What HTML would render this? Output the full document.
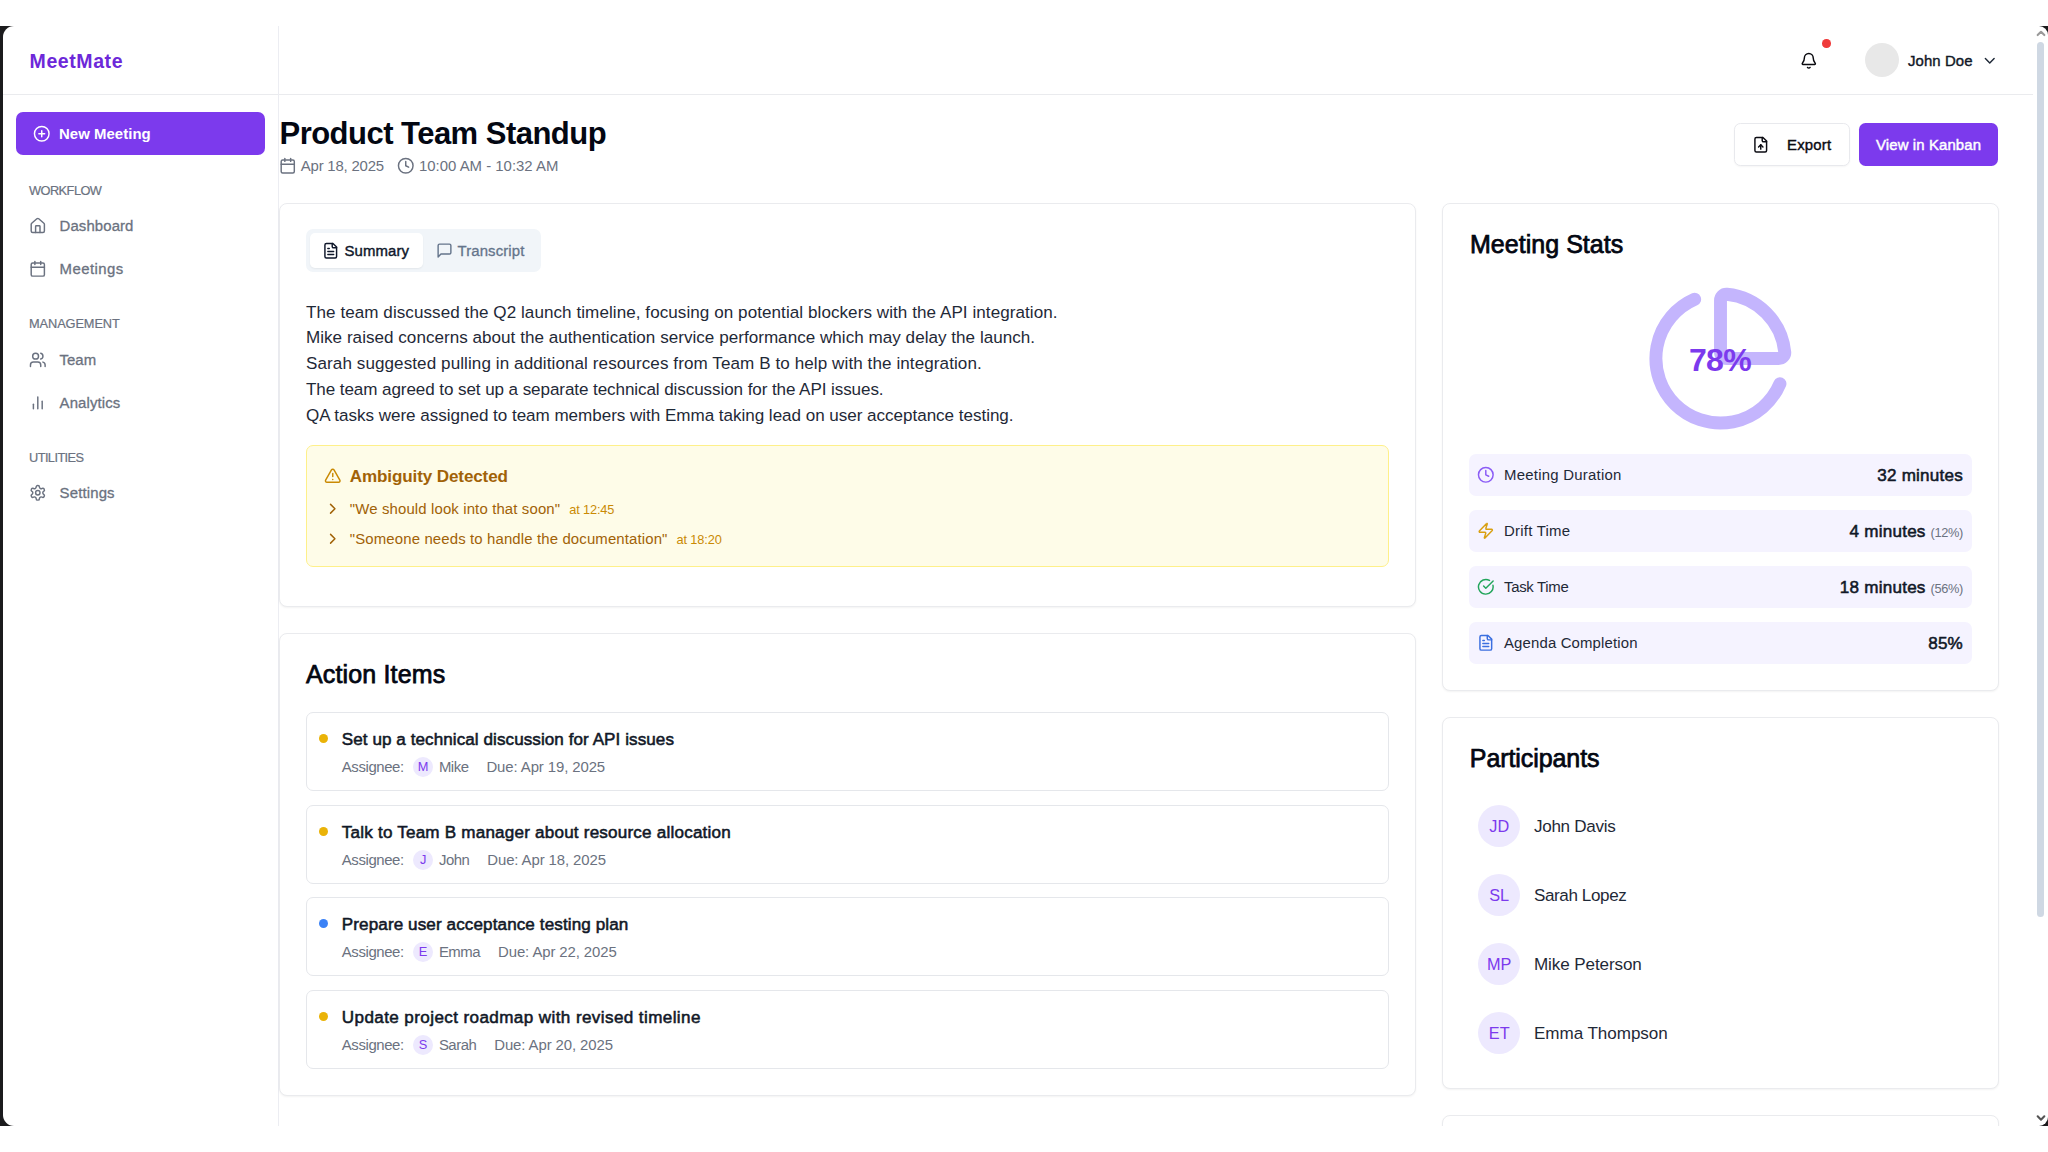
<!DOCTYPE html>
<html lang="en">
<head>
<meta charset="utf-8">
<title>MeetMate - Product Team Standup</title>
<style>
*{box-sizing:border-box;margin:0;padding:0}
html,body{width:2048px;height:1152px;overflow:hidden;background:#fff}
body{font-family:"Liberation Sans","DejaVu Sans",sans-serif;color:#1f2937;position:relative;-webkit-font-smoothing:antialiased}
svg{display:block;fill:none;stroke:currentColor;stroke-width:2;stroke-linecap:round;stroke-linejoin:round}
.frame{position:absolute;left:0;top:26px;width:2048px;height:1100px;background:#1b1b1d}
.win{position:absolute;left:3px;top:26px;width:2045.4px;height:1100px;background:#fff;border-radius:11px 9px 9px 11px;overflow:hidden}
.abs{position:absolute}
.sb{font-weight:400;-webkit-text-stroke:0.45px currentColor}
.md{font-weight:400;-webkit-text-stroke:0.3px currentColor}
/* header */
.hdr{position:absolute;left:0;top:0;width:2030px;height:68.5px;border-bottom:1px solid #eaebee}
.logo{position:absolute;left:26.6px;top:23px;font-size:19.5px;font-weight:700;color:#6d28d9;letter-spacing:.58px;line-height:24px}
/* sidebar */
.side{position:absolute;left:0;top:0;width:275.6px;height:1100px;border-right:1px solid #ecedf2}
.newbtn{position:absolute;left:13px;top:86px;width:249px;height:43px;background:#7c3aed;border-radius:7px;color:#fff}
.newbtn svg{position:absolute;left:17.3px;top:12.8px;width:17.5px;height:17.5px}
.newbtn span{position:absolute;left:43px;top:12px;font-size:14.93px;line-height:19px;font-weight:700;letter-spacing:.05px}
.sec{position:absolute;left:26px;font-size:12.8px;color:#6b7280;line-height:16px;letter-spacing:-.1px;-webkit-text-stroke:.2px currentColor}
.nav{position:absolute;left:27px;height:20px;color:#6b7280;font-size:14.93px;line-height:20px}
.nav svg{position:absolute;left:-.7px;top:.6px;width:17.6px;height:17.6px}
.nav span{position:absolute;left:29.6px;top:-.5px;white-space:nowrap}
/* main */
.title{position:absolute;left:276.5px;top:88.5px;font-size:31px;font-weight:700;color:#030712;letter-spacing:-.52px;line-height:38px;white-space:nowrap}
.meta{position:absolute;left:276px;top:130px;height:20px;font-size:14.93px;line-height:20px;color:#6b7280;white-space:nowrap;letter-spacing:-.2px}
.meta svg{position:absolute;top:1px;width:17.5px;height:17.5px;stroke-width:2}
.card{position:absolute;background:#fff;border:1px solid #eaebee;border-radius:8px;box-shadow:0 1px 2px rgba(0,0,0,.05)}
.h2{position:absolute;font-size:25px;line-height:32px;color:#030712;white-space:nowrap;-webkit-text-stroke:0.75px currentColor;letter-spacing:.15px}

/* top right */
.bell{position:absolute;left:1796.8px;top:26px;width:17.6px;height:17.6px;color:#0a0a0f}
.dot{position:absolute;left:1819.2px;top:13px;width:8.6px;height:8.6px;border-radius:50%;background:#ef3b3b}
.ava{position:absolute;left:1862px;top:17.3px;width:34.2px;height:34.2px;border-radius:50%;background:#e8e8e8}
.uname{position:absolute;left:1905px;top:25px;font-size:14.93px;line-height:20px;color:#111827;white-space:nowrap}
.chev{position:absolute;left:1978px;top:26px;width:17.5px;height:17.5px;color:#1f2937}
.btn{position:absolute;top:97px;height:43px;border-radius:6.5px;font-size:14.93px;line-height:20px;white-space:nowrap}
.btn.out{left:1731px;width:116px;border:1px solid #e8e9ed;background:#fff;color:#0b0b12;box-shadow:0 1px 2px rgba(0,0,0,.04)}
.btn.pri{left:1856px;width:139px;background:#7c3aed;color:#fff}
/* summary */
.tabs{position:absolute;left:26px;top:25.4px;width:235px;height:42.4px;background:#f1f5f9;border-radius:7px}
.tab-a{position:absolute;left:4px;top:4px;width:113px;height:34.4px;background:#fff;border-radius:5px;box-shadow:0 1px 2px rgba(0,0,0,.06)}
.tabs svg{position:absolute;width:16.5px;height:16.5px}
.tabs span{position:absolute;top:11.5px;font-size:14.93px;line-height:20px;white-space:nowrap}
.sum{position:absolute;left:26px;top:95.6px;font-size:17.07px;line-height:25.8px;color:#1f2937;white-space:nowrap;letter-spacing:.055px}
.amb{position:absolute;left:25.8px;top:240.6px;width:1083.2px;height:122.2px;background:#fefce8;border:1px solid #fef08a;border-radius:7px;color:#a16207}
.amb svg{position:absolute}
.amb .t{position:absolute;left:43px;top:19px;font-size:17.07px;line-height:24px;color:#a16207;white-space:nowrap;font-weight:700;letter-spacing:-.12px}
.amb .q{position:absolute;left:43px;font-size:14.93px;line-height:20px;white-space:nowrap;color:#a16207;letter-spacing:.14px}
.amb .q i{font-style:normal;font-size:12.8px;margin-left:9px;color:#ca8a04;letter-spacing:-.15px}

/* action items */
.ai{position:absolute;left:25.8px;width:1083.2px;height:79px;border:1px solid #e5e7eb;border-radius:7px;background:#fff}
.ai .b{position:absolute;left:12.6px;top:21px;width:9px;height:9px;border-radius:50%;background:#eab308}
.ai .tt{position:absolute;left:35px;top:14.6px;font-size:17.07px;line-height:24px;color:#111827;white-space:nowrap;-webkit-text-stroke:0.55px currentColor;letter-spacing:.07px}
.ai .mm{position:absolute;left:35px;top:42.5px;height:22px;font-size:14.93px;line-height:22px;color:#6b7280;white-space:nowrap;letter-spacing:-.1px}
.ai .mm s{text-decoration:none;letter-spacing:-.4px}
.ai .mm b{display:inline-block;vertical-align:middle;width:20px;height:20px;border-radius:50%;background:#ede9fe;color:#7c3aed;font-weight:400;font-size:12.8px;line-height:20px;text-align:center;letter-spacing:0;margin:-2px 5.8px 0 9.4px}
.ai .mm em{font-style:normal;letter-spacing:-.5px}
.ai .mm u{text-decoration:none;margin-left:18px}

/* stats */
.pie{position:absolute;left:200.4px;top:77.3px;width:155px;height:155px;color:#c4b5fd}
.pct{position:absolute;left:199px;top:137px;width:156px;text-align:center;font-size:32px;line-height:38px;font-weight:700;color:#7c3aed;letter-spacing:-.6px}
.st{position:absolute;left:26px;width:503px;height:42.4px;background:#f5f3ff;border-radius:7px;font-size:14.93px;line-height:20px;color:#1f2937}
.st svg{position:absolute;left:8px;top:12.6px;width:17.6px;height:17.6px}
.st .l{position:absolute;left:35px;top:11.9px;white-space:nowrap;letter-spacing:.25px}
.st .r{position:absolute;right:9px;top:10.7px;font-size:17.07px;line-height:24px;white-space:nowrap;color:#111827}
.st .r span{-webkit-text-stroke:0.55px currentColor;letter-spacing:.23px}
.st .r i{font-style:normal;font-size:12.8px;color:#6b7280;margin-left:5px;letter-spacing:-.35px}
/* participants */
.pp{position:absolute;left:35px;height:43px}
.pp b{position:absolute;left:0;top:0;width:42.4px;height:42.4px;border-radius:50%;background:#ede9fe;color:#7c3aed;font-weight:400;font-size:16.3px;line-height:43.5px;text-align:center}
.pp span{position:absolute;left:56px;top:10.3px;font-size:17.07px;line-height:24px;color:#1f2937;white-space:nowrap}
/* scrollbar */
.sbar{position:absolute;left:2033.7px;top:16px;width:7px;height:875px;border-radius:4px;background:#cfd8e3}
.sarr{position:absolute;left:2033.1px;width:10px;height:10px;color:#9a9a9a;stroke-width:5}
</style>
</head>
<body>
<div class="frame"></div>
<div class="win">

  <!-- header -->
  <div class="hdr"></div>
  <!-- sidebar -->
  <div class="side">
    <div class="logo">MeetMate</div>
    <div class="newbtn">
      <svg viewBox="0 0 24 24"><circle cx="12" cy="12" r="10"/><path d="M8 12h8"/><path d="M12 8v8"/></svg>
      <span>New Meeting</span>
    </div>
    <div class="sec" style="top:156.7px;letter-spacing:-.55px">WORKFLOW</div>
    <div class="nav md" style="top:190.6px"><svg viewBox="0 0 24 24"><path d="M15 21v-8a1 1 0 0 0-1-1h-4a1 1 0 0 0-1 1v8"/><path d="M3 10a2 2 0 0 1 .709-1.528l7-5.999a2 2 0 0 1 2.582 0l7 5.999A2 2 0 0 1 21 10v9a2 2 0 0 1-2 2H5a2 2 0 0 1-2-2z"/></svg><span style="letter-spacing:0.1px">Dashboard</span></div>
    <div class="nav md" style="top:233.6px"><svg viewBox="0 0 24 24"><path d="M8 2v4"/><path d="M16 2v4"/><rect width="18" height="18" x="3" y="4" rx="2"/><path d="M3 10h18"/></svg><span style="letter-spacing:0.43px">Meetings</span></div>
    <div class="sec" style="top:290px">MANAGEMENT</div>
    <div class="nav md" style="top:324px"><svg viewBox="0 0 24 24"><path d="M16 21v-2a4 4 0 0 0-4-4H6a4 4 0 0 0-4 4v2"/><circle cx="9" cy="7" r="4"/><path d="M22 21v-2a4 4 0 0 0-3-3.87"/><path d="M16 3.13a4 4 0 0 1 0 7.75"/></svg><span>Team</span></div>
    <div class="nav md" style="top:367px"><svg viewBox="0 0 24 24"><path d="M18 20V10"/><path d="M12 20V4"/><path d="M6 20v-6"/></svg><span style="letter-spacing:0.12px">Analytics</span></div>
    <div class="sec" style="top:423.7px;letter-spacing:-.58px">UTILITIES</div>
    <div class="nav md" style="top:457.6px"><svg viewBox="0 0 24 24"><path d="M12.22 2h-.44a2 2 0 0 0-2 2v.18a2 2 0 0 1-1 1.73l-.43.25a2 2 0 0 1-2 0l-.15-.08a2 2 0 0 0-2.73.73l-.22.38a2 2 0 0 0 .73 2.73l.15.1a2 2 0 0 1 1 1.72v.51a2 2 0 0 1-1 1.74l-.15.09a2 2 0 0 0-.73 2.73l.22.38a2 2 0 0 0 2.73.73l.15-.08a2 2 0 0 1 2 0l.43.25a2 2 0 0 1 1 1.73V20a2 2 0 0 0 2 2h.44a2 2 0 0 0 2-2v-.18a2 2 0 0 1 1-1.73l.43-.25a2 2 0 0 1 2 0l.15.08a2 2 0 0 0 2.73-.73l.22-.39a2 2 0 0 0-.73-2.73l-.15-.08a2 2 0 0 1-1-1.74v-.5a2 2 0 0 1 1-1.74l.15-.09a2 2 0 0 0 .73-2.73l-.22-.38a2 2 0 0 0-2.73-.73l-.15.08a2 2 0 0 1-2 0l-.43-.25a2 2 0 0 1-1-1.73V4a2 2 0 0 0-2-2z"/><circle cx="12" cy="12" r="3"/></svg><span style="letter-spacing:0.15px">Settings</span></div>
  </div>

  <!-- PAGE HEAD -->
  <div class="title">Product Team Standup</div>
  <div class="meta">
    <svg style="left:-.25px" viewBox="0 0 24 24"><path d="M8 2v4"/><path d="M16 2v4"/><rect width="18" height="18" x="3" y="4" rx="2"/><path d="M3 10h18"/></svg>
    <span class="abs" style="left:21.8px">Apr 18, 2025</span>
    <svg style="left:118px" viewBox="0 0 24 24"><circle cx="12" cy="12" r="10"/><polyline points="12 6 12 12 16 14"/></svg>
    <span class="abs" style="left:140px;letter-spacing:0">10:00 AM - 10:32 AM</span>
  </div>


  <svg class="bell" viewBox="0 0 24 24"><path d="M10.268 21a2 2 0 0 0 3.464 0"/><path d="M3.262 15.326A1 1 0 0 0 4 17h16a1 1 0 0 0 .74-1.673C19.41 13.956 18 12.499 18 8A6 6 0 0 0 6 8c0 4.499-1.411 5.956-2.738 7.326"/></svg>
  <div class="dot"></div>
  <div class="ava"></div>
  <div class="uname md" style="-webkit-text-stroke-width:.4px;letter-spacing:.08px">John Doe</div>
  <svg class="chev" viewBox="0 0 24 24"><path d="m6 9 6 6 6-6"/></svg>

  <div class="btn out">
    <svg class="abs" style="left:17px;top:11.5px;width:17.5px;height:17.5px" viewBox="0 0 24 24"><path d="M15 2H6a2 2 0 0 0-2 2v16a2 2 0 0 0 2 2h12a2 2 0 0 0 2-2V7Z"/><path d="M14 2v4a2 2 0 0 0 2 2h4"/><path d="M12 12v6"/><path d="m15 15-3-3-3 3"/></svg>
    <span class="abs md" style="left:52px;top:10.5px;letter-spacing:.2px;-webkit-text-stroke-width:.4px">Export</span>
  </div>
  <div class="btn pri"><span class="abs md" style="left:17px;top:11.5px;letter-spacing:.12px;-webkit-text-stroke-width:.45px">View in Kanban</span></div>

  <!-- SUMMARY CARD -->
  <div class="card" style="left:276px;top:177px;width:1137.2px;height:404px">
    <div class="tabs">
      <div class="tab-a"></div>
      <svg style="left:16.2px;top:12.3px;width:17.5px;height:17.5px;color:#0f172a" viewBox="0 0 24 24"><path d="M15 2H6a2 2 0 0 0-2 2v16a2 2 0 0 0 2 2h12a2 2 0 0 0 2-2V7Z"/><path d="M14 2v4a2 2 0 0 0 2 2h4"/><path d="M10 9H8"/><path d="M16 13H8"/><path d="M16 17H8"/></svg>
      <span class="md" style="left:38.4px;color:#0f172a;letter-spacing:.12px;-webkit-text-stroke-width:.4px">Summary</span>
      <svg style="left:130px;top:12.6px;width:17px;height:17px;color:#64748b" viewBox="0 0 24 24"><path d="M21 15a2 2 0 0 1-2 2H7l-4 4V5a2 2 0 0 1 2-2h14a2 2 0 0 1 2 2z"/></svg>
      <span class="md" style="left:151.6px;color:#64748b;letter-spacing:.1px">Transcript</span>
    </div>
    <div class="sum"><span style="letter-spacing:0.062px">The team discussed the Q2 launch timeline, focusing on potential blockers with the API integration.</span><br><span style="letter-spacing:0.028px">Mike raised concerns about the authentication service performance which may delay the launch.</span><br><span style="letter-spacing:0.084px">Sarah suggested pulling in additional resources from Team B to help with the integration.</span><br><span style="letter-spacing:-0.088px">The team agreed to set up a separate technical discussion for the API issues.</span><br><span style="letter-spacing:-0.032px">QA tasks were assigned to team members with Emma taking lead on user acceptance testing.</span></div>
    <div class="amb">
      <svg style="left:17.5px;top:21.2px;width:17.5px;height:17.5px;color:#ca8a04" viewBox="0 0 24 24"><path d="m21.73 18-8-14a2 2 0 0 0-3.48 0l-8 14A2 2 0 0 0 4 21h16a2 2 0 0 0 1.73-3"/><path d="M12 9v4"/><path d="M12 17h.01"/></svg>
      <div class="t">Ambiguity Detected</div>
      <svg style="left:17px;top:54.3px;width:17.5px;height:17.5px" viewBox="0 0 24 24"><path d="m9 18 6-6-6-6"/></svg>
      <div class="q" style="top:53.2px">"We should look into that soon"<i>at 12:45</i></div>
      <svg style="left:17px;top:84.3px;width:17.5px;height:17.5px" viewBox="0 0 24 24"><path d="m9 18 6-6-6-6"/></svg>
      <div class="q" style="top:83.3px">"Someone needs to handle the documentation"<i>at 18:20</i></div>
    </div>
  </div>


  <!-- ACTION ITEMS CARD -->
  <div class="card" style="left:276px;top:607px;width:1137.2px;height:463.2px">
    <div class="h2" style="left:26px;top:24.2px">Action Items</div>
    <div class="ai" style="top:78px"><div class="b" style="background:#eab308"></div><div class="tt">Set up a technical discussion for API issues</div><div class="mm"><s>Assignee:</s><b>M</b><em>Mike</em><u>Due: Apr 19, 2025</u></div></div>
    <div class="ai" style="top:171px"><div class="b" style="background:#eab308"></div><div class="tt" style="letter-spacing:0.21px">Talk to Team B manager about resource allocation</div><div class="mm"><s>Assignee:</s><b>J</b><em>John</em><u>Due: Apr 18, 2025</u></div></div>
    <div class="ai" style="top:263px"><div class="b" style="background:#3b82f6"></div><div class="tt" style="letter-spacing:0.11px">Prepare user acceptance testing plan</div><div class="mm"><s>Assignee:</s><b>E</b><em>Emma</em><u>Due: Apr 22, 2025</u></div></div>
    <div class="ai" style="top:356px"><div class="b" style="background:#eab308"></div><div class="tt" style="letter-spacing:0.4px">Update project roadmap with revised timeline</div><div class="mm"><s>Assignee:</s><b>S</b><em>Sarah</em><u>Due: Apr 20, 2025</u></div></div>
  </div>


  <!-- STATS CARD -->
  <div class="card" style="left:1439px;top:177px;width:557px;height:488px">
    <div class="h2" style="left:27px;top:24.1px;letter-spacing:.03px">Meeting Stats</div>
    <svg class="pie" viewBox="0 0 24 24"><path d="M21 12c.552 0 1.005-.449.95-.998a10 10 0 0 0-8.953-8.951c-.55-.055-.998.398-.998.95v8a1 1 0 0 0 1 1z"/><path d="M21.21 15.89A10 10 0 1 1 8 2.83"/></svg>
    <div class="pct">78%</div>
    <div class="st" style="top:249.6px"><svg style="color:#8b5cf6" viewBox="0 0 24 24"><circle cx="12" cy="12" r="10"/><polyline points="12 6 12 12 16 14"/></svg><span class="l">Meeting Duration</span><span class="r"><span>32 minutes</span></span></div>
    <div class="st" style="top:305.6px"><svg style="color:#d9a012" viewBox="0 0 24 24"><path d="M4 14a1 1 0 0 1-.78-1.63l9.9-10.2a.5.5 0 0 1 .86.46l-1.92 6.02A1 1 0 0 0 13 10h7a1 1 0 0 1 .78 1.63l-9.9 10.2a.5.5 0 0 1-.86-.46l1.92-6.02A1 1 0 0 0 11 14z"/></svg><span class="l">Drift Time</span><span class="r"><span>4 minutes</span><i>(12%)</i></span></div>
    <div class="st" style="top:361.6px"><svg style="color:#22a55b" viewBox="0 0 24 24"><path d="M21.801 10A10 10 0 1 1 17 3.335"/><path d="m9 11 3 3L22 4"/></svg><span class="l" style="letter-spacing:-.3px">Task Time</span><span class="r"><span>18 minutes</span><i>(56%)</i></span></div>
    <div class="st" style="top:417.6px"><svg style="color:#3b6fe0" viewBox="0 0 24 24"><path d="M15 2H6a2 2 0 0 0-2 2v16a2 2 0 0 0 2 2h12a2 2 0 0 0 2-2V7Z"/><path d="M14 2v4a2 2 0 0 0 2 2h4"/><path d="M10 9H8"/><path d="M16 13H8"/><path d="M16 17H8"/></svg><span class="l" style="letter-spacing:.15px">Agenda Completion</span><span class="r"><span>85%</span></span></div>
  </div>

  <!-- PARTICIPANTS CARD -->
  <div class="card" style="left:1439px;top:691px;width:557px;height:372.3px">
    <div class="h2" style="left:26.8px;top:24px;letter-spacing:-.08px">Participants</div>
    <div class="pp" style="top:86.5px"><b>JD</b><span style="letter-spacing:-0.3px">John Davis</span></div>
    <div class="pp" style="top:155.5px"><b>SL</b><span style="letter-spacing:-0.4px">Sarah Lopez</span></div>
    <div class="pp" style="top:224.5px"><b>MP</b><span style="letter-spacing:-0.1px">Mike Peterson</span></div>
    <div class="pp" style="top:293.5px"><b>ET</b><span style="letter-spacing:-0.05px">Emma Thompson</span></div>
  </div>

  <!-- NEXT CARD (partially visible) -->
  <div class="card" style="left:1439px;top:1089px;width:557px;height:200px"></div>

  <!-- scrollbar -->
  <svg class="sarr" style="top:2.2px" viewBox="0 0 24 24"><path d="m4 17 8-8 8 8"/></svg>
  <div class="sbar"></div>
  <svg class="sarr" style="top:1086.6px;color:#555" viewBox="0 0 24 24"><path d="m4 8 8 8 8-8"/></svg>



</div>
</body>
</html>
